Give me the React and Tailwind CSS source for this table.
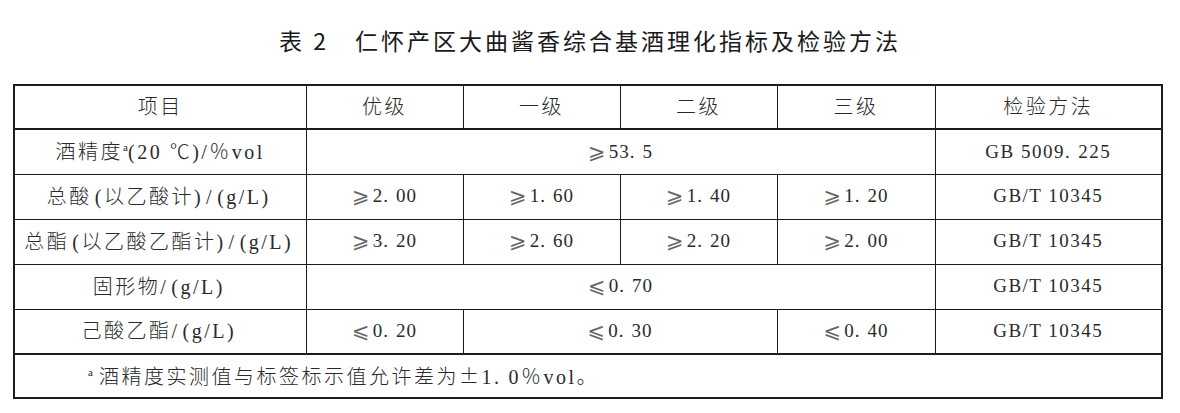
import React from "react";

const serif = "font-['Liberation_Serif','Noto_Sans_CJK_SC','DejaVu_Sans',serif]";
const hei = "font-['Noto_Sans_CJK_SC','DejaVu_Sans',sans-serif]";

const line = "border-[#1c1c1c]";

const Cell = ({ children, colSpan, className = "" }) => (
  <td
    colSpan={colSpan}
    className={`border ${line} text-center align-middle p-0 whitespace-nowrap ${className}`}
  >
    {children}
  </td>
);

// 宋体式小数点：点贴着前一位，后面留空
const Dot = () => <span className="mr-[7px]">.</span>;

const Sign = ({ s }) => (
  <span className="font-['DejaVu_Serif','DejaVu_Sans',serif] text-[21px] leading-none mr-[2px] relative top-[1px] text-[#666]">
    {s}
  </span>
);

const Val = ({ v }) => {
  const sign = v[0];
  const [a, b] = v.slice(1).split(".");
  return (
    <span className="text-[19px] tracking-[1px] text-[#2a2a2a]">
      <Sign s={sign} />
      {a}
      <Dot />
      {b}
    </span>
  );
};

// 括号外侧略留空，接近原排版
const withParens = (text) =>
  text.split(/([()])/).map((part, i) =>
    part === "(" ? (
      <span key={i} className="pl-[3px]">
        {part}
      </span>
    ) : part === ")" ? (
      <span key={i} className="pr-[3px]">
        {part}
      </span>
    ) : (
      part
    )
  );

const Label = ({ children }) => (
  <span className="text-[20px] tracking-[2.5px] text-[#2a2a2a] font-light">
    {children}
  </span>
);

const Sup = ({ className = "" }) => (
  <sup className={`text-[11px] tracking-normal -top-[0.7em] ${className}`}>a</sup>
);

const Method = ({ children }) => (
  <span className="text-[19px] tracking-[1.5px] text-[#2a2a2a]">{children}</span>
);

const rows = [
  {
    name: "总酸(以乙酸计)/(g/L)",
    vals: ["⩾2.00", "⩾1.60", "⩾1.40", "⩾1.20"],
  },
  {
    name: "总酯(以乙酸乙酯计)/(g/L)",
    vals: ["⩾3.20", "⩾2.60", "⩾2.20", "⩾2.00"],
  },
];

export default function App() {
  return (
    <div className={`w-[1180px] h-[413px] bg-white ${serif}`}>
      <div className="h-[84px] flex items-center justify-center pb-[4px]">
        <h1
          className={`${hei} text-[23px] tracking-[3px] text-[#1a1a1a] font-normal`}
        >
          表 2<span className="inline-block w-[26px]"></span>
          仁怀产区大曲酱香综合基酒理化指标及检验方法
        </h1>
      </div>

      <table
        className={`ml-[13px] w-[1148px] table-fixed border-collapse border-2 ${line}`}
      >
        <colgroup>
          <col className="w-[292px]" />
          <col className="w-[157px]" />
          <col className="w-[157px]" />
          <col className="w-[157px]" />
          <col className="w-[158px]" />
          <col className="w-[227px]" />
        </colgroup>
        <tbody>
          <tr className="h-[44px]">
            {["项目", "优级", "一级", "二级", "三级", "检验方法"].map((h) => (
              <Cell key={h} className="border-b-2">
                <Label>{h}</Label>
              </Cell>
            ))}
          </tr>

          <tr className="h-[45px]">
            <Cell>
              <Label>
                酒精度
                <Sup />
                (20 ℃)/％vol
              </Label>
            </Cell>
            <Cell colSpan={4}>
              <Val v="⩾53.5" />
            </Cell>
            <Cell>
              <Method>
                GB 5009
                <Dot />
                225
              </Method>
            </Cell>
          </tr>

          {rows.map((r) => (
            <tr key={r.name} className="h-[45px]">
              <Cell>
                <Label>{withParens(r.name)}</Label>
              </Cell>
              {r.vals.map((v, i) => (
                <Cell key={i}>
                  <Val v={v} />
                </Cell>
              ))}
              <Cell>
                <Method>GB/T 10345</Method>
              </Cell>
            </tr>
          ))}

          <tr className="h-[45px]">
            <Cell>
              <Label>{withParens("固形物/(g/L)")}</Label>
            </Cell>
            <Cell colSpan={4}>
              <Val v="⩽0.70" />
            </Cell>
            <Cell>
              <Method>GB/T 10345</Method>
            </Cell>
          </tr>

          <tr className="h-[45px]">
            <Cell className="border-b-2">
              <Label>{withParens("己酸乙酯/(g/L)")}</Label>
            </Cell>
            <Cell className="border-b-2">
              <Val v="⩽0.20" />
            </Cell>
            <Cell colSpan={2} className="border-b-2">
              <Val v="⩽0.30" />
            </Cell>
            <Cell className="border-b-2">
              <Val v="⩽0.40" />
            </Cell>
            <Cell className="border-b-2">
              <Method>GB/T 10345</Method>
            </Cell>
          </tr>

          <tr className="h-[44px]">
            <Cell colSpan={6} className="text-left pl-[73px]">
              <Label>
                <Sup className="mr-[6px]" />
                酒精度实测值与标签标示值允许差为
                <span className={`${hei} font-light`}>±</span>1
                <Dot />
                0％vol。
              </Label>
            </Cell>
          </tr>
        </tbody>
      </table>
    </div>
  );
}
